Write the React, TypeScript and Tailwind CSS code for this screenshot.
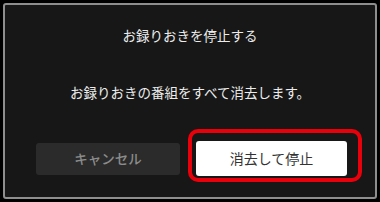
export default function App() {
  return (
    <div
      className="w-[380px] h-[202px] bg-black p-[3px]"
      style={{ fontFamily: '"Noto Sans CJK JP", "Noto Sans", sans-serif' }}
    >
      {/* Dialog */}
      <div className="h-[196px] rounded-[3px] border-2 border-[#8e8e8e] bg-[#161716] flex flex-col">
        <h1 className="pt-[20px] text-center text-[13.5px] leading-[20px] text-[#ececec]">
          お録りおきを停止する
        </h1>
        <p className="mt-[37px] text-center text-[13.5px] leading-[20px] text-[#ececec]">
          お録りおきの番組をすべて消去します。
        </p>

        {/* Buttons */}
        <div className="mt-[39px] flex items-center pl-[31px] gap-[16px]">
          <button className="w-[144px] h-[32px] rounded-[3px] bg-[#2a2b2a] text-[13.5px] font-medium text-[#8c8c8c]">
            キャンセル
          </button>
          <div className="relative">
            <button className="w-[151px] h-[35px] rounded-[3px] bg-white text-[14px] text-[#333]">
              消去して停止
            </button>
            {/* highlight */}
            <div className="absolute -left-[8px] -top-[12px] -right-[15px] -bottom-[6px] rounded-[10px] border-4 border-[#e8000b]" />
          </div>
        </div>
      </div>
    </div>
  );
}
